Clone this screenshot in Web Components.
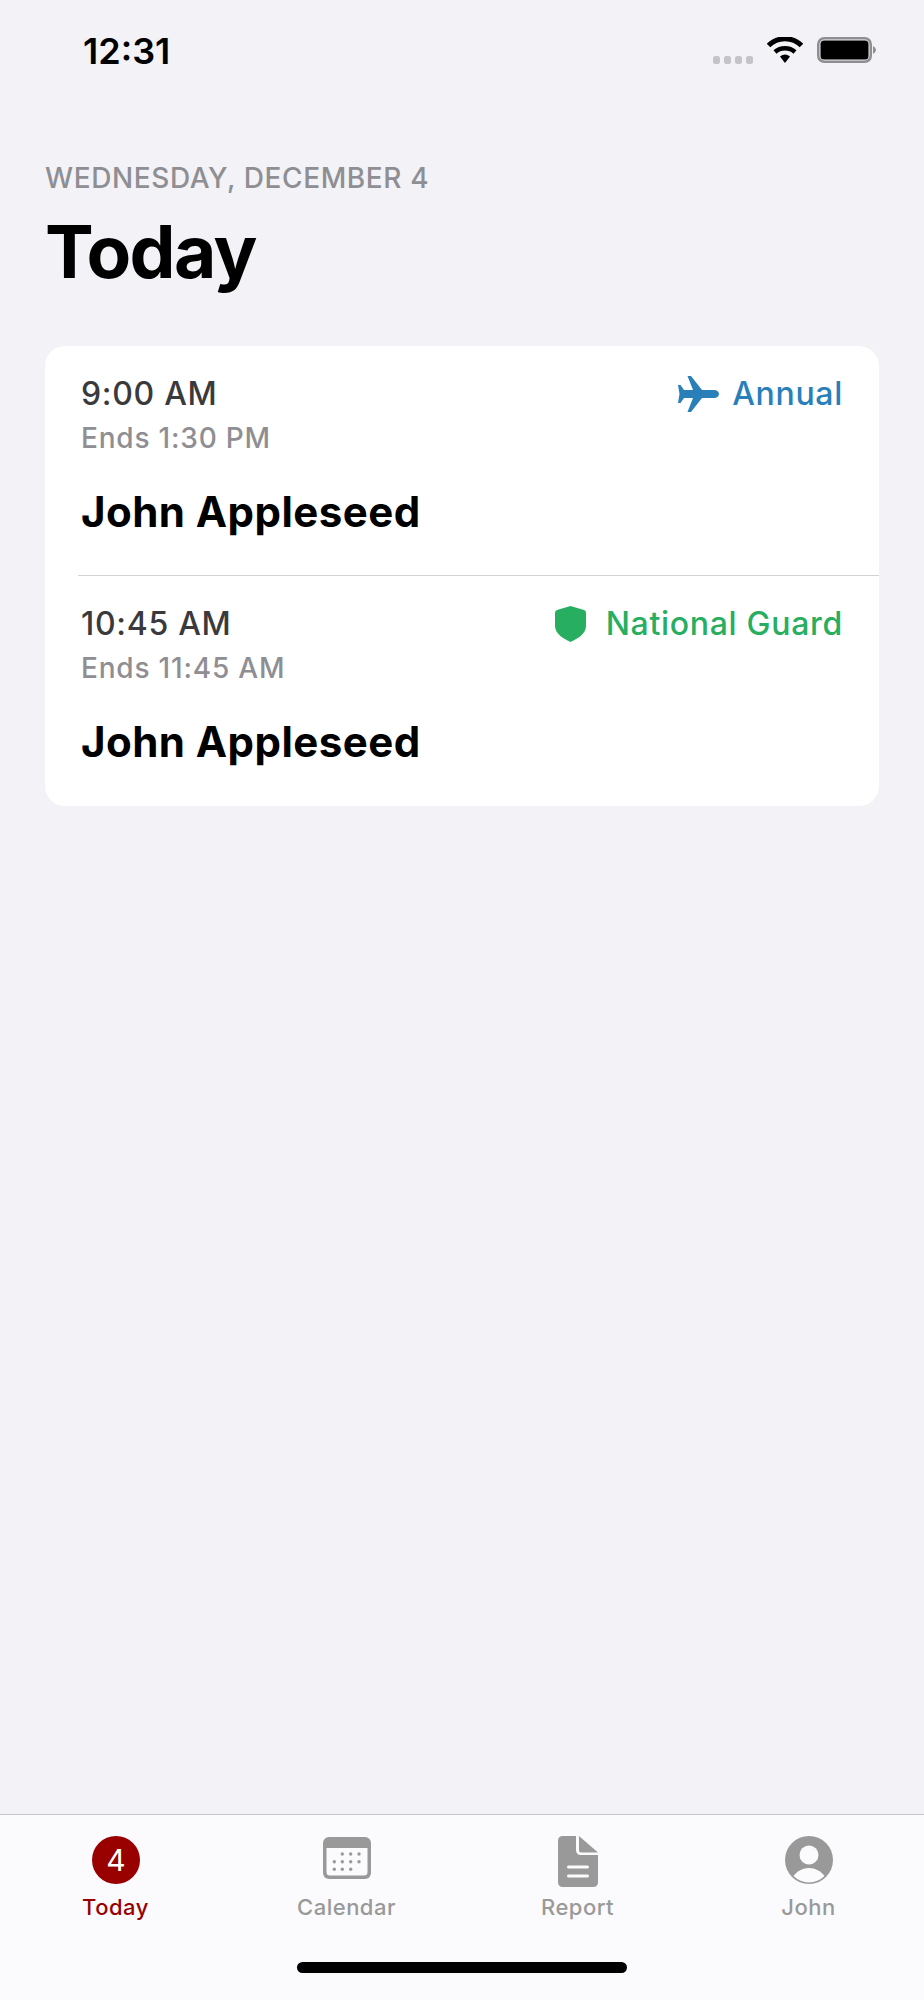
<!DOCTYPE html>
<html lang="en">
<head>
<meta charset="utf-8">
<title>Today</title>
<style>
  html, body { margin: 0; padding: 0; background: #f2f2f7; }
  body { font-family: Inter, 'Noto Sans', sans-serif; }
</style>
</head>
<body>
<today-app>
  <status-bar slot="status" time="12:31"></status-bar>
  <today-header slot="header" date="WEDNESDAY, DECEMBER 4" title="Today"></today-header>
  <appointment-list slot="content">
    <appointment-row start="9:00 AM" end="Ends 1:30 PM" name="John Appleseed" label="Annual" color="#2980b9">
      <svg slot="icon" width="41" height="36" viewBox="0 0 41 36" fill="currentColor"><path d="M0 9H2.5L6 14H15L9.5 0H13L24 14H36C39 14 41 16 41 18S39 22 36 22H24L13 36H9.5L15 22H6L2.5 27H0L1.5 18Z"/></svg>
    </appointment-row>
    <appointment-row start="10:45 AM" end="Ends 11:45 AM" name="John Appleseed" label="National Guard" color="#27ae60">
      <svg slot="icon" style="margin-right:7px" width="31" height="36" viewBox="0 0 31 36" fill="currentColor"><path d="M15.5 0L29 4Q31 4.6 31 7V20C31 28 22 33 15.5 36C9 33 0 28 0 20V7Q0 4.6 2 4Z"/></svg>
    </appointment-row>
  </appointment-list>
  <tab-bar slot="tabs">
    <tab-item label="Today" active>
      <svg slot="icon" width="48" height="48" viewBox="0 0 48 48"><circle cx="24" cy="24" r="24" fill="#990000"/><text x="24" y="34.5" text-anchor="middle" font-family="Inter, sans-serif" font-size="30" fill="#fff">4</text></svg>
    </tab-item>
    <tab-item label="Calendar">
      <svg slot="icon" width="48" height="44" viewBox="0 0 48 44">
        <rect y="1" width="48" height="42" rx="6" fill="#999"/>
        <path d="M3.5 12H44.5V36A3.5 3.5 0 0 1 41 39.500H7A3.500 3.500 0 0 1 3.500 36Z" fill="#fbfbfd"/>
        <g fill="#999">
          <circle cx="19.300" cy="18" r="1.700"/><circle cx="27.700" cy="18" r="1.700"/><circle cx="36" cy="18" r="1.700"/>
          <circle cx="11.300" cy="25.700" r="1.700"/><circle cx="19.300" cy="25.700" r="1.700"/><circle cx="27.700" cy="25.700" r="1.700"/><circle cx="36" cy="25.700" r="1.700"/>
          <circle cx="11.300" cy="33.300" r="1.700"/><circle cx="19.300" cy="33.300" r="1.700"/><circle cx="27.700" cy="33.300" r="1.700"/>
        </g>
      </svg>
    </tab-item>
    <tab-item label="Report">
      <svg slot="icon" width="40" height="52" viewBox="0 0 40 52">
        <path fill="#999" d="M5 0H18V14Q18 19 23 19H40V46Q40 51 35 51H5Q0 51 0 46V5Q0 0 5 0Z"/>
        <path fill="#999" d="M21 0L40 16.500H23Q21 16.500 21 14.500Z"/>
        <path d="M10.500 31H29.500M10.500 40H29.500" stroke="#fbfbfd" stroke-width="3" stroke-linecap="round"/>
      </svg>
    </tab-item>
    <tab-item label="John">
      <svg slot="icon" width="48" height="48" viewBox="0 0 48 48">
        <circle cx="24" cy="24" r="24" fill="#999"/>
        <circle cx="24" cy="19" r="9.500" fill="#fbfbfd"/>
        <path fill="#fbfbfd" d="M8.500 40C12 35 18 32 24 32C30 32 36 35 39.500 40A22 22 0 0 1 8.500 40Z"/>
      </svg>
    </tab-item>
  </tab-bar>
</today-app>

<script>
// page frame: status and header on top, tabs pinned to the bottom by flow
class TodayApp extends HTMLElement {
  constructor() {
    super();
    this.attachShadow({ mode: 'open' });
    this.shadowRoot.innerHTML = `
      <style>
        :host {
          display: flex;
          flex-direction: column;
          width: 924px;
          height: 2000px;
          background: #f2f2f7;
          overflow: hidden;
        }
        main { flex: 1; }
      </style>
      <slot name="status"></slot>
      <slot name="header"></slot>
      <main><slot name="content"></slot></main>
      <slot name="tabs"></slot>
    `;
  }
}

class StatusBar extends HTMLElement {
  constructor() {
    super();
    this.attachShadow({ mode: 'open' });
  }

  connectedCallback() {
    this.shadowRoot.innerHTML = `
      <style>
        :host {
          display: flex;
          justify-content: space-between;
          height: 100px;
          box-sizing: border-box;
          padding: 33px 47px 0 83px;
        }
        .time {
          font: 600 36px/36px Inter, sans-serif;
          color: #000;
        }
        .icons { display: flex; align-items: flex-start; padding-top: 4px; }
        .dots { display: flex; gap: 4px; margin: 19px 14px 0 0; }
        .dots i { width: 7px; height: 8px; border-radius: 2.500px; background: #c4c4c8; }
        svg { display: block; }
        .wifi { margin-right: 14px; }
      </style>
      <div class="time">${this.getAttribute('time')}</div>
      <div class="icons">
        <div class="dots"><i></i><i></i><i></i><i></i></div>
        <svg class="wifi" width="36" height="26" viewBox="0 0 36 26">
          <path d="M1.500 8.500C10.500 -0.500 25.500 -0.500 34.500 8.500" fill="none" stroke="#000" stroke-width="5"/>
          <path d="M8 15C13.500 10 22.500 10 28 15" fill="none" stroke="#000" stroke-width="4.500"/>
          <path d="M13 19.500Q18 15.500 23 19.500L18 26Z" fill="#000"/>
        </svg>
        <svg width="60" height="26" viewBox="0 0 60 26">
          <rect x="1.250" y="1.250" width="52.500" height="23.500" rx="6" fill="none" stroke="#8e8e93" stroke-width="2.500"/>
          <rect x="3.500" y="3.500" width="48" height="19" rx="3.500" fill="#000"/>
          <path d="M56 9Q59 10.500 59 13T56 17Z" fill="#8e8e93"/>
        </svg>
      </div>
    `;
  }
}

class TodayHeader extends HTMLElement {
  constructor() {
    super();
    this.attachShadow({ mode: 'open' });
  }

  connectedCallback() {
    this.shadowRoot.innerHTML = `
      <style>
        :host {
          display: block;
          padding: 60px 45px 0;
          height: 246px;
          box-sizing: border-box;
        }
        .date {
          font: 500 28px/36px Inter, sans-serif;
          letter-spacing: 0.6px;
          color: #8e8e93;
        }
        h1 {
          margin: 12px 0 0;
          font: 700 73px/88px Inter, sans-serif;
          letter-spacing: -1.600px;
          color: #000;
        }
      </style>
      <div class="date">${this.getAttribute('date')}</div>
      <h1>${this.getAttribute('title')}</h1>
    `;
  }
}

class AppointmentList extends HTMLElement {
  constructor() {
    super();
    this.attachShadow({ mode: 'open' });
    this.shadowRoot.innerHTML = `
      <style>
        :host {
          display: block;
          margin: 0 45px;
          background: #fff;
          border-radius: 20px;
          overflow: hidden;
        }
      </style>
      <slot></slot>
    `;
  }
}

class AppointmentRow extends HTMLElement {
  constructor() {
    super();
    this.attachShadow({ mode: 'open' });
  }

  connectedCallback() {
    const color = this.getAttribute('color');
    this.shadowRoot.innerHTML = `
      <style>
        :host {
          display: block;
          height: 229px;
          box-sizing: border-box;
          padding: 28px 36px 0 36px;
        }
        /* inset hairline between rows, runs to the card edge */
        :host(:not(:first-child)) {
          height: 231px;
          margin-left: 33px;
          padding-left: 3px;
          border-top: 1px solid #d1d1d6;
        }
        .top { display: flex; justify-content: space-between; align-items: center; }
        .start {
          font: 500 32px/40px Inter, sans-serif;
          letter-spacing: 0.7px;
          color: #3a3a3c;
        }
        .tag {
          display: flex;
          align-items: center;
          gap: 13px;
          color: ${color};
          font: 500 32px/40px Inter, sans-serif;
          letter-spacing: 0.7px;
        }
        ::slotted(svg) { display: block; }
        .end {
          margin-top: 6px;
          font: 500 28px/36px Inter, sans-serif;
          letter-spacing: 0.8px;
          color: #8e8e93;
        }
        .name { margin-top: 30px; font: 700 42px/52px Inter, sans-serif; letter-spacing: 0.45px; color: #000; }
      </style>
      <div class="top">
        <div class="start">${this.getAttribute('start')}</div>
        <div class="tag"><slot name="icon"></slot><span>${this.getAttribute('label')}</span></div>
      </div>
      <div class="end">${this.getAttribute('end')}</div>
      <div class="name">${this.getAttribute('name')}</div>
    `;
  }
}

class TabBar extends HTMLElement {
  constructor() {
    super();
    this.attachShadow({ mode: 'open' });
    this.shadowRoot.innerHTML = `
      <style>
        :host {
          display: block;
          height: 186px;
          box-sizing: border-box;
          background: #fbfbfd;
          border-top: 1px solid #c6c6c8;
        }
        .tabs { display: grid; grid-template-columns: repeat(4, 231px); padding-top: 21px; }
        .home {
          width: 330px;
          height: 11px;
          margin: 36px auto 0;
          border-radius: 6px;
          background: #000;
        }
      </style>
      <div class="tabs"><slot></slot></div>
      <div class="home"></div>
    `;
  }
}

class TabItem extends HTMLElement {
  constructor() {
    super();
    this.attachShadow({ mode: 'open' });
  }

  connectedCallback() {
    const active = this.hasAttribute('active');
    this.shadowRoot.innerHTML = `
      <style>
        :host {
          display: flex;
          flex-direction: column;
          align-items: center;
          height: 90px;
        }
        .icon { height: 54px; display: flex; align-items: flex-start; }
        ::slotted(svg) { display: block; }
        .label {
          margin-top: 3px;
          font: 500 22px/28px Inter, sans-serif;
          letter-spacing: 0.5px;
          color: ${active ? '#990000' : '#999'};
        }
      </style>
      <div class="icon"><slot name="icon"></slot></div>
      <div class="label">${this.getAttribute('label')}</div>
    `;
  }
}

customElements.define('today-app', TodayApp);
customElements.define('status-bar', StatusBar);
customElements.define('today-header', TodayHeader);
customElements.define('appointment-list', AppointmentList);
customElements.define('appointment-row', AppointmentRow);
customElements.define('tab-bar', TabBar);
customElements.define('tab-item', TabItem);
</script>
</body>
</html>
